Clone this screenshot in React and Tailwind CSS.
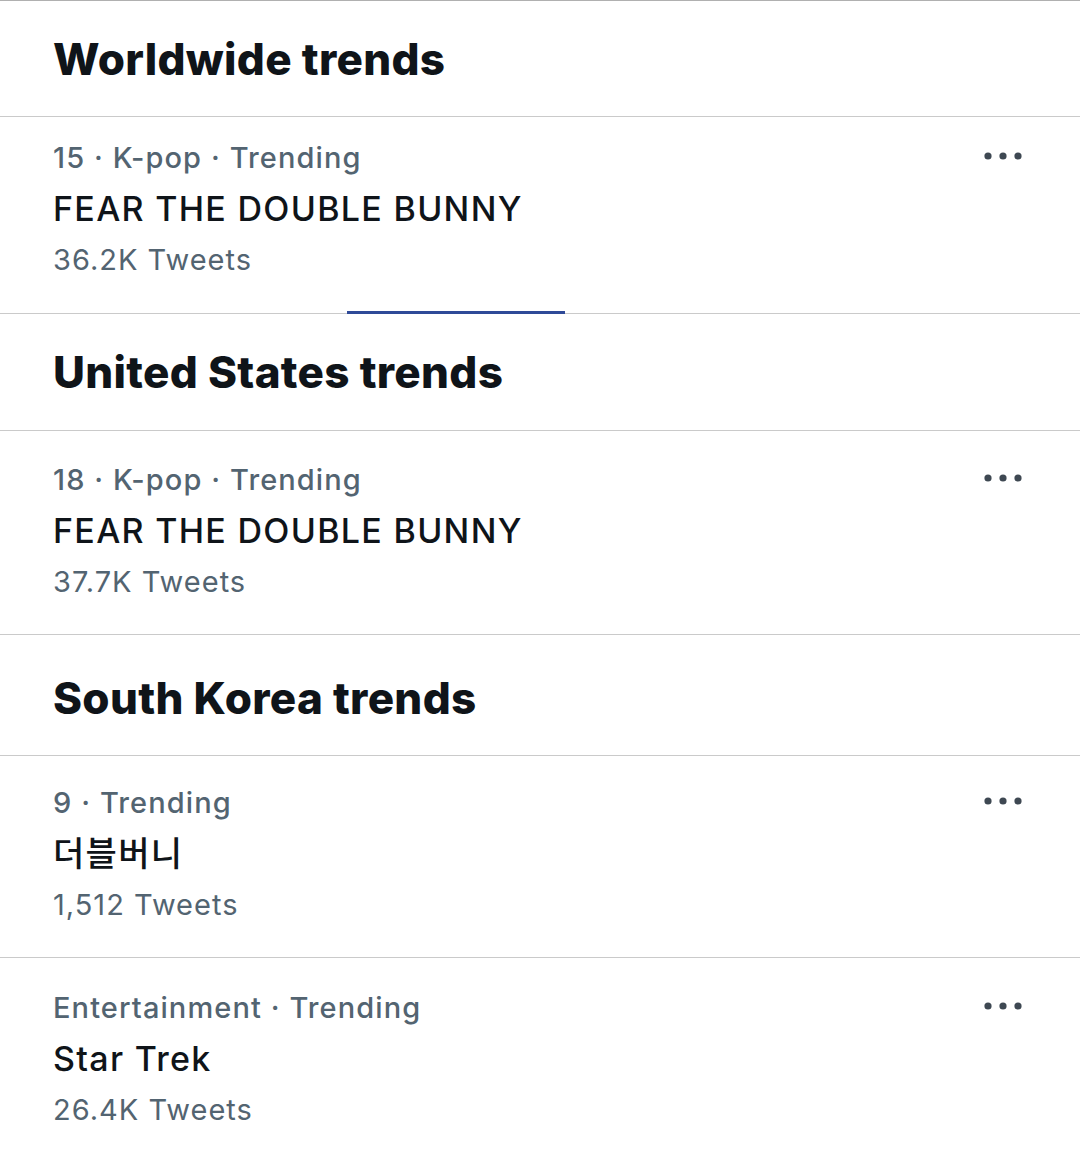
const sections = [
  {
    title: "Worldwide trends",
    headerClass: "h-[116px]",
    trends: [
      { meta: "15 · K-pop · Trending", name: "FEAR THE DOUBLE BUNNY", count: "36.2K Tweets", pad: "pt-[15px] pb-[28px]", active: true },
    ],
  },
  {
    title: "United States trends",
    headerClass: "h-[117px]",
    trends: [
      { meta: "18 · K-pop · Trending", name: "FEAR THE DOUBLE BUNNY", count: "37.7K Tweets", pad: "pt-[23px] pb-[27px]" },
    ],
  },
  {
    title: "South Korea trends",
    headerClass: "h-[121px] pt-[6px]",
    trends: [
      { meta: "9 · Trending", name: "더블버니", count: "1,512 Tweets", pad: "pt-[21px] pb-[27px]" },
      { meta: "Entertainment · Trending", name: "Star Trek", count: "26.4K Tweets", pad: "pt-[24px] pb-[28px]" },
    ],
  },
];

function MoreDots() {
  return (
    <svg width="38" height="8" viewBox="0 0 38 8" className="text-[#3e4852]" fill="currentColor">
      <circle cx="4" cy="4" r="3.6" />
      <circle cx="19" cy="4" r="3.6" />
      <circle cx="34" cy="4" r="3.6" />
    </svg>
  );
}

function TrendRow({ trend }) {
  return (
    <div className={`relative flex border-b border-[#cacaca] pl-[53px] pr-[58px] ${trend.pad}`}>
      <div className="flex-1 min-w-0">
        <div className="text-[29px] leading-[51px] font-medium tracking-[1.1px] text-[#536471]">{trend.meta}</div>
        <div className="text-[34px] leading-[51px] font-medium tracking-[1.3px] text-[#0f1419]">{trend.name}</div>
        <div className="text-[29px] leading-[51px] tracking-[1px] text-[#536471]">{trend.count}</div>
      </div>
      <div className="h-[47px] flex items-center">
        <MoreDots />
      </div>
      {trend.active && (
        <div className="absolute left-[347px] bottom-[-1px] w-[218px] h-[3px] bg-[#2f4a98]" />
      )}
    </div>
  );
}

export default function App() {
  return (
    <div
      className="w-[1080px] h-[1156px] overflow-hidden bg-white border-t border-[#b0b0b0]"
      style={{ fontFamily: "Inter, 'Noto Sans CJK KR', sans-serif" }}
    >
      {sections.map((section) => (
        <div key={section.title}>
          <div className={`flex items-center border-b border-[#cacaca] pl-[53px] ${section.headerClass}`}>
            <h2 className="text-[44px] font-extrabold tracking-[0.3px] text-[#0f1419]">{section.title}</h2>
          </div>
          {section.trends.map((trend, i) => (
            <TrendRow key={i} trend={trend} />
          ))}
        </div>
      ))}
    </div>
  );
}
